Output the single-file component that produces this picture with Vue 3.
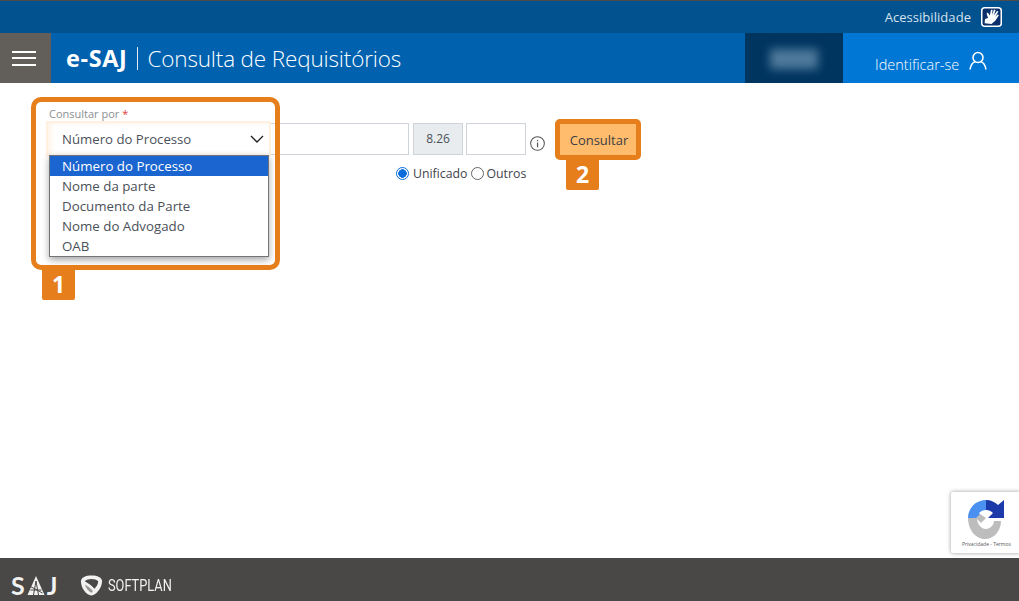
<script setup>
const options = ['Número do Processo', 'Nome da parte', 'Documento da Parte', 'Nome do Advogado', 'OAB']
</script>

<template>
  <div class="page">
    <div class="topbar">
      <span class="acc-text">Acessibilidade</span>
      <svg class="acc-icon" width="21" height="20" viewBox="0 0 21 20">
        <rect x="0.75" y="0.75" width="19.5" height="18.5" rx="3" fill="#0b2f6b" stroke="#fff" stroke-width="1.5" />
        <path d="M4 12 L3.6 16.2 L10.5 17 L14.5 13.5 L18 8 L16.6 7.6 L14.2 10 L17.4 4.6 L16 4 L12.8 8.4 L14.6 3 L13 2.6 L10.9 8 L11.6 2.8 L10 2.8 L8.8 8.6 L6.8 5.6 L5.6 6.4 L7 11 Z" fill="#fff" />
      </svg>
    </div>
    <header class="header">
      <button class="menu" aria-label="Menu"><span></span><span></span><span></span></button>
      <div class="title"><b>e-SAJ</b><i class="pipe"></i><span>Consulta de Requisitórios</span></div>
      <div class="brand"><div class="blur"></div></div>
      <div class="login">
        <span>Identificar-se</span>
        <svg width="18" height="19" viewBox="0 0 18 19" fill="none" stroke="#fff" stroke-width="1.5">
          <circle cx="9" cy="6.5" r="5" />
          <path d="M1 18.5 C2 13.5 4.5 11 6.5 10.8 M17 18.5 C16 13.5 13.5 11 11.5 10.8" />
        </svg>
      </div>
    </header>

    <main class="main">
      <div class="form">
        <div class="select-col">
          <label class="label">Consultar por <em>*</em></label>
          <div class="select">
            <span>Número do Processo</span>
            <svg width="14" height="8" viewBox="0 0 14 8" fill="none" stroke="#222" stroke-width="1.4"><path d="M1 1 L7 7 L13 1" /></svg>
          </div>
          <ul class="dropdown">
            <li v-for="(o, i) in options" :key="o" :class="{ active: i === 0 }">{{ o }}</li>
          </ul>
          <div class="mark mark-one"></div>
          <div class="badge badge-one">1</div>
        </div>
        <div class="number-col">
          <div class="fields">
            <div class="field wide"></div>
            <div class="field code">8.26</div>
            <div class="field short"></div>
            <svg class="info" width="15" height="15" viewBox="0 0 16 16" fill="none">
              <circle cx="8" cy="8" r="7.300" stroke="#555" stroke-width="1.100" />
              <rect x="7.400" y="7" width="1.300" height="5" fill="#555" />
              <rect x="7.400" y="4.200" width="1.300" height="1.400" fill="#555" />
            </svg>
          </div>
          <div class="radios">
            <span class="radio on"></span><span class="r-label">Unificado</span>
            <span class="radio"></span><span class="r-label">Outros</span>
          </div>
        </div>
        <div class="btn-col">
          <button class="consult">Consultar</button>
          <div class="badge badge-two">2</div>
        </div>
      </div>
    </main>

    <div class="recaptcha">
      <svg class="rc-logo" width="38" height="41" viewBox="0 0 38 41">
        <path d="M1 19 C1 9 9 1 19 1 L19 11 C16 11 14 12 12 14 L16 19 Z" fill="#4a90f0" />
        <path d="M19 1 C24 1 28 3 31 6 L37 1 L37 19 L21 19 L26 14 C24 12 22 11 19 11 Z" fill="#1c3aa9" />
        <path d="M1 19 H10 C10 25 14 30 19 30 C23 30 27 26 27 22 L34 22 C34 32 27 40 18 40 C8 40 1 30 1 19 Z" fill="#bdbdbd" />
        <path d="M9 19 L13 15 L19 19 L14 24 Z" fill="#bdbdbd" />
      </svg>
      <small>Privacidade - Termos</small>
    </div>

    <footer class="footer">
      <span class="saj">S</span>
      <svg class="saj-mark" width="18" height="19" viewBox="0 0 17 19">
        <path d="M8.500 0 L17 19 H0 Z" fill="#f2f2f2" />
        <path d="M8.500 5 L6 19 M8.500 5 L11 19 M3 14 L14 14 M2 10 L15 17" stroke="#4a4846" stroke-width="1" fill="none" />
      </svg>
      <span class="saj">J</span>
      <svg class="shield" width="23" height="23" viewBox="0 0 24 23" fill="none">
        <path d="M12 1 C18 1 23 3 23 7 C23 14 17 21 12 22 C6 21 1 14 1 7 C1 3 6 1 12 1 Z" fill="#f2f2f2" />
        <path d="M5 7 C8 4 16 4 19 7 C19 10 17 13 15 15 C12 11 8 9 5 7 Z" fill="#4a4846" />
        <path d="M5 10.500 C8 12 11 14 13.500 17.500 L12 19 C9 18 6 14 5 10.500 Z" fill="#9a9896" />
      </svg>
      <span class="softplan">SOFTPLAN</span>
    </footer>
  </div>
</template>

<style>
html, body { margin: 0; background: #fff; }
</style>

<style scoped>
.page {
  width: 1019px;
  height: 601px;
  display: flex;
  flex-direction: column;
  position: relative;
  overflow: hidden;
  font-family: "Open Sans", "Noto Sans", sans-serif;
  color: #4b5159;
}
.topbar {
  height: 32px;
  flex: none;
  border-top: 1px solid #4e4c4a;
  background: #02528f;
  display: flex;
  align-items: center;
  justify-content: flex-end;
  padding-right: 17px;
  gap: 10px;
}
.acc-text { color: #d6e2ee; font-size: 13px; letter-spacing: 0.05px; }
.acc-icon { margin-top: -1px; }
.header {
  height: 50px;
  flex: none;
  background: #0061af;
  display: flex;
  align-items: stretch;
  color: #fff;
}
.menu {
  width: 51px;
  background: #625f5b;
  border: 0;
  padding: 0 3px 0 0;
  display: flex;
  flex-direction: column;
  align-items: center;
  justify-content: center;
  gap: 4.5px;
}
.menu span { display: block; width: 24px; height: 2px; background: #fff; }
.title {
  flex: 1;
  padding-left: 15px;
  display: flex;
  align-items: center;
  font-size: 22.500px;
  letter-spacing: -0.15px;
  font-weight: 300;
}
.title b { font-weight: 700; font-size: 23.500px; letter-spacing: 0.600px; }
.pipe { width: 1px; height: 23px; background: #dfe9f3; margin: 0 9px 0 10px; }
.brand {
  width: 98px;
  background: #003560;
  display: flex;
  align-items: center;
  justify-content: center;
}
.blur { width: 48px; height: 20px; background: #4e7a9b; filter: blur(5px); margin-top: 2px; }
.login {
  width: 176px;
  background: #0077d4;
  display: flex;
  align-items: center;
  padding-left: 32px;
  box-sizing: border-box;
  gap: 10px;
  font-size: 14.500px;
  font-weight: 300;
  padding-top: 12px;
}
.login svg { margin-top: -8px; }
.main { flex: 1; }
.form {
  display: flex;
  align-items: flex-start;
  padding: 23px 0 0 48px;
}
.select-col { position: relative; width: 221px; flex: none; }
.label { display: block; font-size: 11px; line-height: 16px; color: #8d8f92; height: 16px; margin-left: 1px; }
.label em { color: #e0423c; font-style: normal; }
.select {
  height: 32px;
  margin-top: 1px;
  box-sizing: border-box;
  box-shadow: 0 0 0 2px #fff0e0, inset 3px 0 5px #fff3e6;
  padding: 0 5px 0 14px;
  display: flex;
  align-items: center;
  justify-content: space-between;
  font-size: 13.200px;
  background: #fff;
}
.dropdown {
  list-style: none;
  margin: 0;
  padding: 0;
  position: absolute;
  left: 1px;
  top: 49px;
  width: 218px;
  border: 1px solid #71757a;
  background: #fff;
  box-shadow: 0 3px 7px rgba(0, 0, 0, .35);
  z-index: 3;
}
.dropdown li { height: 20px; line-height: 20px; font-size: 13.300px; padding-left: 12px; }
.dropdown li.active { background: #1a65d0; color: #fff; }
.mark {
  position: absolute;
  left: -17px;
  top: -9px;
  width: 249px;
  height: 173px;
  box-sizing: border-box;
  border: 5px solid #e67e1c;
  border-radius: 10px;
  z-index: 4;
  pointer-events: none;
}
.badge {
  position: absolute;
  width: 33px;
  height: 30px;
  background: #e67e1c;
  color: #fff;
  font-weight: 700;
  font-size: 23px;
  line-height: 29px;
  text-align: center;
  border-radius: 0 0 2px 2px;
  z-index: 4;
}
.badge-one { left: -6px; top: 164px; }
.number-col { width: 290px; flex: none; padding-top: 17px; }
.fields { display: flex; align-items: center; }
.field { height: 32px; box-sizing: border-box; border: 1px solid #ced4da; background: #fff; }
.wide { width: 140px; border-left: 0; }
.code {
  width: 50px;
  margin-left: 4px;
  background: #e9ecef;
  font-size: 12px;
  text-align: center;
  line-height: 30px;
}
.short { width: 60px; margin-left: 3px; }
.info { margin-left: 4px; margin-top: 8px; }
.radios { display: flex; align-items: center; padding: 9px 0 0 127px; height: 18px; }
.radio {
  width: 13px;
  height: 13px;
  box-sizing: border-box;
  border: 1px solid #666;
  border-radius: 50%;
  background: #fff;
  margin-right: 3px;
}
.radio.on { border: 1.500px solid #0a6ddb; background: radial-gradient(circle, #0a6ddb 0 4px, #fff 4.500px); margin-right: 4px; }
.r-label { font-size: 12.300px; margin-right: 3px; color: #3f444b; }
.btn-col { position: relative; padding-top: 13px; }
.consult {
  display: block;
  width: 86px;
  height: 41px;
  margin-left: -4px;
  background: #ffbc6c;
  border: 5px solid #e67e1c;
  border-radius: 5px;
  font-family: inherit;
  font-size: 13px;
  color: #3c4045;
  padding: 0 0 0 2px;
}
.badge-two { left: 7px; top: 54px; }
.recaptcha {
  position: absolute;
  left: 951px;
  top: 492px;
  width: 70px;
  height: 61px;
  box-sizing: border-box;
  background: #fff;
  border-radius: 2px;
  box-shadow: 0 0 4px rgba(0, 0, 0, .4);
  display: flex;
  flex-direction: column;
  padding: 7px 0 0 0;
}
.rc-logo { margin-left: 16px; filter: blur(.4px); flex: none; }
.recaptcha small { font-size: 5px; color: #555; margin: 1px 0 0 11px; white-space: nowrap; }
.footer {
  height: 43px;
  flex: none;
  background: #4a4846;
  display: flex;
  align-items: center;
  padding: 12px 0 0 11px;
  box-sizing: border-box;
  color: #f2f2f2;
}
.saj { font-size: 25px; font-weight: 700; line-height: 1; font-family: "Lato", sans-serif; }
.saj-mark { margin: 0 2px 0 2px; }
.shield { margin-left: 23px; }
.softplan { margin-left: 5px; font-size: 16px; font-family: "Roboto", sans-serif; transform: scaleX(.8); transform-origin: left; }
</style>
